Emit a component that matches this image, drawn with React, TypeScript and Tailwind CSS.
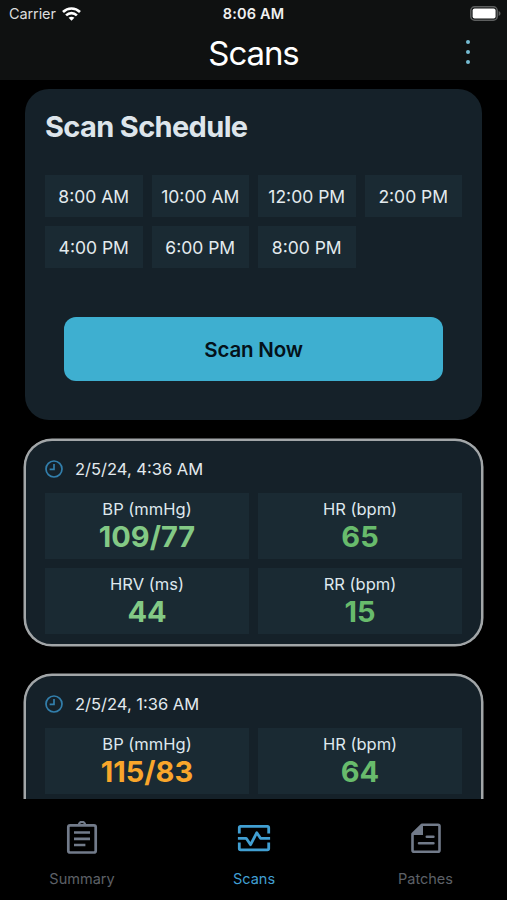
import clsx from 'clsx';

interface Metric {
  label: string;
  value: string;
  tone: 'soft' | 'good' | 'warn';
}

interface Scan {
  id: number;
  taken: string;
  metrics: Metric[];
}

const SCHEDULE = ['8:00 AM', '10:00 AM', '12:00 PM', '2:00 PM', '4:00 PM', '6:00 PM', '8:00 PM'];

const SCANS: Scan[] = [
  {
    id: 1,
    taken: '2/5/24, 4:36 AM',
    metrics: [
      { label: 'BP (mmHg)', value: '109/77', tone: 'soft' },
      { label: 'HR (bpm)', value: '65', tone: 'good' },
      { label: 'HRV (ms)', value: '44', tone: 'soft' },
      { label: 'RR (bpm)', value: '15', tone: 'good' },
    ],
  },
  {
    id: 2,
    taken: '2/5/24, 1:36 AM',
    metrics: [
      { label: 'BP (mmHg)', value: '115/83', tone: 'warn' },
      { label: 'HR (bpm)', value: '64', tone: 'good' },
    ],
  },
];

const TONES = {
  soft: 'text-[#83c985]',
  good: 'text-[#68bb6c]',
  warn: 'text-[#f9a62b]',
};

function WifiIcon() {
  return (
    <svg width="19" height="14" viewBox="0 0 19 14" fill="none" stroke="#fff" strokeWidth="2.6">
      <path d="M1 5C5.8.3 13.2.3 18 5" />
      <path d="M4.1 8.4c3.1-3 7.7-3 10.8 0" />
      <path d="M9.5 13.8 6.6 10.8c1.7-1.5 4.1-1.5 5.8 0z" fill="#fff" stroke="none" />
    </svg>
  );
}

function BatteryIcon() {
  return (
    <svg width="31" height="15" viewBox="0 0 31 15">
      <rect x="0.8" y="0.8" width="26.4" height="13.4" rx="3.8" fill="none" stroke="#5d5f5f" strokeWidth="1.5" />
      <rect x="2.6" y="2.6" width="23" height="9.8" rx="2" fill="#fff" />
      <path d="M28.6 5v5c1.2-.5 1.9-1.3 1.9-2.5S29.8 5.5 28.6 5z" fill="#5d5f5f" />
    </svg>
  );
}

function ClockIcon() {
  return (
    <svg width="18" height="18" viewBox="0 0 18 18" fill="none" stroke="#327fac" strokeWidth="1.7">
      <circle cx="9" cy="9" r="8" />
      <path d="M9 4v5.3H4.6" />
    </svg>
  );
}

function SummaryIcon() {
  return (
    <svg width="32" height="34" viewBox="0 0 32 34" fill="none" stroke="currentColor" strokeWidth="2.7">
      <rect x="2.3" y="4.3" width="27.4" height="27.2" rx="1.8" />
      <path d="M12.8 4a3.2 3.2 0 0 1 6.4 0" strokeWidth="2.2" />
      <path d="M8 11.5h16M8 17.8h16M8 24h11.4" />
    </svg>
  );
}

function ScansIcon() {
  return (
    <svg width="36" height="28" viewBox="0 0 36 28" fill="none" stroke="currentColor" strokeWidth="2.8">
      <path d="M3.3 9.4V3.6q0-1.3 1.3-1.3h26.8q1.3 0 1.3 1.3v5.8" />
      <path d="M3.3 18.6v6q0 1.3 1.3 1.3h26.8q1.3 0 1.3-1.3v-6" />
      <path d="M1.9 14.3h8.3l4.4 6.4 6.2-12 3.7 5.6h9.6" strokeLinejoin="round" />
    </svg>
  );
}

function PatchesIcon() {
  return (
    <svg width="30" height="30" viewBox="0 0 30 30" fill="none" stroke="currentColor" strokeWidth="2.6">
      <path d="M11 1.8h16q1.5 0 1.5 1.5v23.9q0 1.5-1.5 1.5H3q-1.5 0-1.5-1.5V11z" strokeLinejoin="round" />
      <path d="M12 1.5V12H1.5V11L11 1.5z" fill="currentColor" stroke="none" />
      <path d="M15.800 13.8h6.6M8 20.2h14.4" strokeLinecap="round" />
    </svg>
  );
}

function StatusBar() {
  return (
    <div className="grid h-7 grid-cols-3 items-center pl-[9px] pr-[6px] text-[14.5px] text-[#dcdddd]">
      <div className="flex items-center gap-[6px]">
        <span className="tracking-[-0.1px]">Carrier</span>
        <WifiIcon />
      </div>
      <div className="pr-[3px] text-center font-semibold tracking-[0.15px] text-[#f0f0f0]">8:06 AM</div>
      <div className="flex justify-end pb-px"><BatteryIcon /></div>
    </div>
  );
}

function Header() {
  return (
    <header className="h-20 shrink-0 bg-[#0f1111]">
      <StatusBar />
      <div className="grid h-[50px] grid-cols-[1fr_auto_1fr] items-center">
        <span />
        <h1 className="pt-px text-[33px] tracking-[-1.1px]">Scans</h1>
        <button className="mr-[37px] mb-[2px] flex flex-col items-end gap-[6px]" aria-label="More">
          <span className="size-1 rounded-full bg-[#75bcd3]" />
          <span className="size-1 rounded-full bg-[#75bcd3]" />
          <span className="size-1 rounded-full bg-[#75bcd3]" />
        </button>
      </div>
    </header>
  );
}

function ScheduleCard() {
  return (
    <section className="h-[331px] shrink-0 rounded-[24px] bg-[#152129] px-5 pt-[18px]">
      <h2 className="text-[29px] leading-10 font-bold tracking-[-0.65px] text-[#dde5eb]">Scan Schedule</h2>
      <div className="mt-[28px] grid grid-cols-4 gap-[9px]">
        {SCHEDULE.map(time => (
          <div key={time} className="flex h-[42px] items-center justify-center bg-[#1a2a33] pt-[2px] text-[17.5px] whitespace-nowrap text-[#e3eaee]">{time}</div>
        ))}
      </div>
      <button className="mx-[19px] mt-[49px] block h-16 w-[379px] rounded-xl bg-[#3eafd0] pt-[2px] text-[20.5px] font-semibold tracking-[-0.2px] text-[#04121a]">Scan Now</button>
    </section>
  );
}

function ScanCard({ scan }: { scan: Scan }) {
  return (
    <section className="-mx-px min-h-[207px] shrink-0 rounded-[28px] border-2 border-[#a2a6a8] bg-[#152129] px-[19px] pt-[16px] pb-[10px] shadow-[0_0_0_0.5px_#a2a6a8]">
      <div className="flex h-6 items-center gap-[12px] text-[16.5px] text-[#e3eaee]">
        <ClockIcon />
        <span>{scan.taken}</span>
      </div>
      <div className="mt-[12px] grid grid-cols-2 gap-[9px]">
        {scan.metrics.map(m => (
          <div key={m.label} className="h-[66px] bg-[#1a2a33] pt-[6px] text-center">
            <div className="text-[16.5px] leading-5 text-[#dfe8ee]">{m.label}</div>
            <div className={clsx('text-[29px] leading-9 font-bold', TONES[m.tone])}>{m.value}</div>
          </div>
        ))}
      </div>
    </section>
  );
}

function TabBar() {
  const tabs = [
    { name: 'Summary', icon: <SummaryIcon />, active: false },
    { name: 'Scans', icon: <ScansIcon />, active: true },
    { name: 'Patches', icon: <PatchesIcon />, active: false },
  ];
  return (
    <nav className="grid h-[101px] shrink-0 grid-cols-[164px_1fr_163px] bg-black">
      {tabs.map(tab => (
        <button key={tab.name} className={clsx('flex flex-col items-center pt-[21px]', tab.active ? 'text-[#419fd2]' : 'text-[#727b8a]')}>
          <span className="flex h-[36px] items-center">{tab.icon}</span>
          <span className={clsx('mt-[13px] text-[14.5px] leading-5', !tab.active && 'text-[#5d6067]')}>{tab.name}</span>
        </button>
      ))}
    </nav>
  );
}

export default function App() {
  return (
    <div className="flex h-[900px] w-[507px] flex-col overflow-hidden bg-black font-[Inter,sans-serif] text-white">
      <Header />
      <main className="flex min-h-0 flex-1 flex-col overflow-hidden px-[25px] pt-[9px]">
        <ScheduleCard />
        <div className="mt-[19px] flex flex-col gap-[28px]">
          {SCANS.map(scan => <ScanCard key={scan.id} scan={scan} />)}
        </div>
      </main>
      <TabBar />
    </div>
  );
}
